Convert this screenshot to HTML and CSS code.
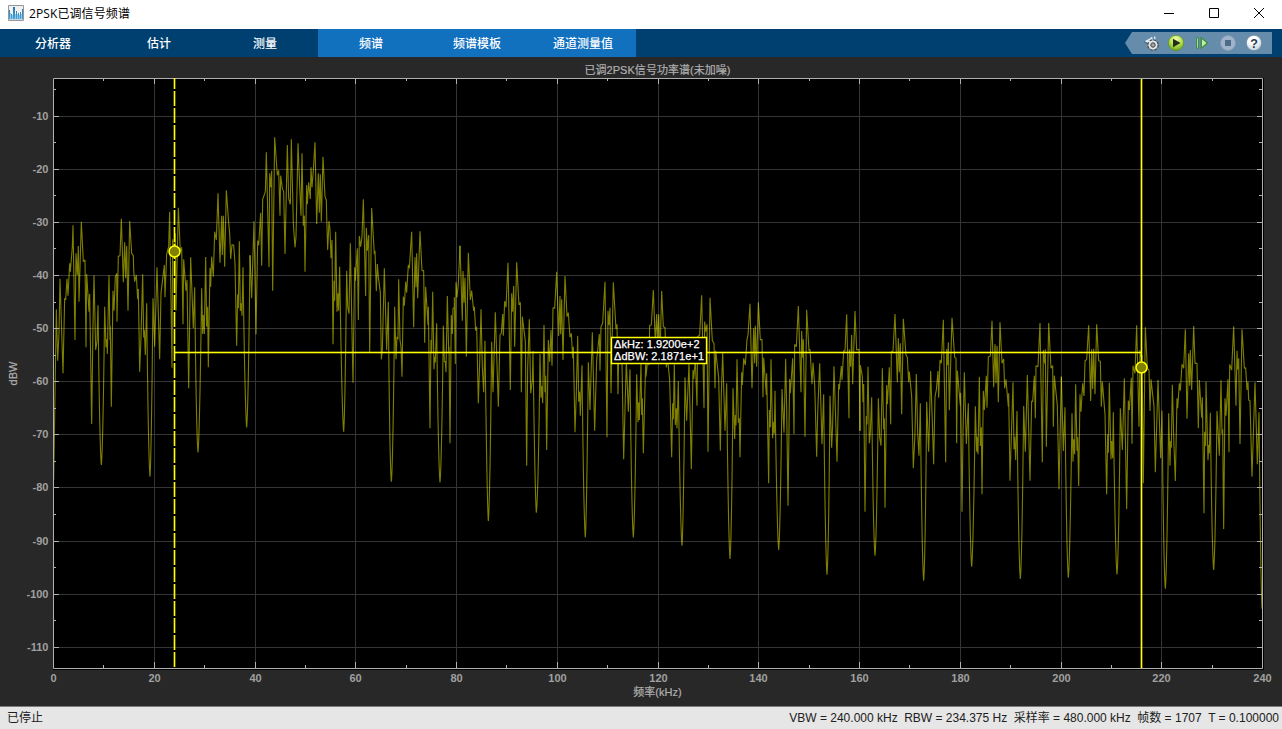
FILE: index.html
```html
<!DOCTYPE html>
<html lang="zh-CN">
<head>
<meta charset="utf-8">
<title>2PSK已调信号频谱</title>
<link rel="stylesheet" href="styles.css">
</head>
<body>
<div class="window">
  <header class="titlebar">
    <svg class="app-icon" width="16" height="16" viewBox="0 0 16 16">
      <defs><linearGradient id="bars" x1="0" y1="0" x2="0" y2="1"><stop offset="0" stop-color="#2374aa"/><stop offset="1" stop-color="#45a5dc"/></linearGradient></defs>
      <path d="M.5.5h15v15H.5z" fill="#f3f0ee" stroke="#969696"/>
      <path d="M1 14.5h14" stroke="#c8d8e2"/>
      <path d="M2 8h1v6H2zM4 10h1v4H4zM7 9h1v5H7zM9 9h1v5H9zM11 10h1v4h-1zM13 9h1v5h-1z" fill="#8fc8e8"/>
      <path d="M1 5h1v9H1zM3 9h1v5H3zM5 2h2v12H5zM8 6h1v8H8zM10 8h1v6h-1zM12 7h1v7h-1zM14 4h1v10h-1z" fill="url(#bars)"/>
    </svg>
    <h1 class="title">2PSK已调信号频谱</h1>
    <div class="window-buttons">
      <svg width="10" height="10" viewBox="0 0 10 10"><path d="M0 5.5h10"/></svg>
      <svg width="10" height="10" viewBox="0 0 10 10"><path d="M.5.5h9v9h-9z"/></svg>
      <svg width="10" height="10" viewBox="0 0 10 10"><path d="M0 0l10 10M10 0L0 10"/></svg>
    </div>
  </header>
  <nav class="toolstrip">
    <span class="tab">分析器</span><span class="tab">估计</span><span class="tab">测量</span><span class="tab tab-active">频谱</span><span class="tab tab-active">频谱模板</span><span class="tab tab-active">通道测量值</span>
    <svg class="quick-access" width="147" height="22" viewBox="1125 32 147 22">
      <defs>
        <radialGradient id="play" cx=".5" cy=".25" r=".8"><stop offset="0" stop-color="#effbb4"/><stop offset=".5" stop-color="#b7e34d"/><stop offset="1" stop-color="#5d9b18"/></radialGradient>
        <radialGradient id="help" cx=".4" cy=".25" r=".8"><stop offset=".35" stop-color="#fff"/><stop offset="1" stop-color="#b8ccd8"/></radialGradient>
      </defs>
      <path d="M1132 32h140v22h-140l-7-11z" fill="#668cab"/>
      <path d="M1144 41.500l7.500-4v8z" fill="#d8eaf7"/><path d="M1144 41.500l7.500 4" stroke="#33556e"/><path d="M1151.700 37v4M1154.700 36.500v4" stroke="#d0e6f4" stroke-width="1.500"/>
      <circle cx="1153" cy="45" r="5" fill="none" stroke="#444" stroke-width="1.600" stroke-dasharray="2.400 1.527"/>
      <circle cx="1153" cy="45" r="3.500" fill="none" stroke="#e6e6e6" stroke-width="2.200"/><circle cx="1153" cy="45" r="2.200" fill="#a0a8ae" stroke="#4b4b4b"/>
      <circle cx="1176" cy="43" r="7.700" fill="url(#play)" stroke="#5c8b2c" stroke-width=".7"/><path d="M1173 38.700l7.500 4.300-7.500 4.300z" fill="#242c1e"/>
      <path d="M1197.500 37.500v11" stroke="#388b35" stroke-width="2.600"/><path d="M1197.500 38.300v9.400" stroke="#b6e5a0" stroke-width=".9"/><path d="M1201.300 37.900l6.200 5.100-6.200 5.100z" fill="#c2ebaa" stroke="#388b35" stroke-width="1.200"/>
      <circle cx="1228" cy="43" r="7.500" fill="#9fb4cb" stroke="#8699b0" stroke-width=".8"/><path d="M1225 40h6v6h-6z" fill="#4d6a89"/>
      <circle cx="1254" cy="43" r="7.700" fill="url(#help)" stroke="#567891" stroke-width=".6"/><text x="1254" y="47.500" class="help-mark">?</text>
    </svg>
  </nav>
  <main class="scope">
    <svg class="chart" width="1282" height="649" viewBox="0 57 1282 649">
      <path d="M53 78h1211v592H53z" fill="#000"/>
      <path class="grid" d="M154.500 79v589M255.500 79v589M355.500 79v589M456.500 79v589M557.500 79v589M658.500 79v589M758.500 79v589M859.500 79v589M960.500 79v589M1061.500 79v589M1161.500 79v589M54 116.500h1208M54 169.500h1208M54 222.500h1208M54 275.500h1208M54 328.500h1208M54 381.500h1208M54 434.500h1208M54 487.500h1208M54 541.500h1208M54 594.500h1208M54 647.500h1208"/>
      <g class="trace">
        <path transform="translate(40 120) scale(.33333)" d="M41 1080L49 568 53 722 57 640 60 476 69 760 74 535 77 540 81 476 84 527 89 430 91 455 97 380 99 316 105 660 108 400 112 465 115 378 117 545 124 305 130 425 135 420 138 682 140 462 147 575 149 522 155 912 159 615 162 466 167 690 171 665 174 556Q179 990 184 1035 189 990 194 560L198 682 201 657 202 702 207 466 210 660 211 617 214 860 219 512 222 572 226 470 230 460 231 605 235 408 240 408 244 296 250 487 254 367 257 475 260 378 264 572 269 303 275 400 280 407 281 450 284 485 289 465 293 538 295 507 299 755 303 652 308 463 311 652 313 630 316 705 320 550Q325 1020 330 1070 334 1020 339 535L344 680 351 442 359 718 363 520 373 435 375 532 380 402 386 380 389 275 396 743 398 358 403 400 406 340 408 572 415 263 421 395 425 382 429 613 431 418 438 512 441 480 446 805 452 412 460 625 464 502Q469 950 474 997 479 950 485 505L488 642 490 585 493 642 497 411 500 620 503 560 505 742 510 443 512 500 515 410 520 470 524 335 529 360 534 220 540 428 545 287 547 405 550 287 554 440 559 211 566 308 569 340 572 417 576 374 581 375 585 430 590 677 593 523 595 565 598 364 601 573 604 550 606 587 609 442Q615 870 620 922 625 870 630 406"/>
        <path transform="translate(250 120) scale(.33333)" d="M0 406L5 535 12 304 18 643 23 362 26 376 32 278 35 437 38 238 46 215 49 97 57 441 59 160 62 202 65 152 68 512 74 52 82 166 86 151 90 287 92 167 97 205 101 215 105 402 112 75 116 235 121 253 124 58 130 310 135 382 138 350 144 70 150 222 153 287 156 100 160 317 163 287 165 455 170 195 172 253 176 187 181 237 183 142 186 202 190 151 195 67 200 312 205 160 208 278 211 163 214 305 219 110 225 230 229 240 230 287 233 390 237 303 240 330 243 415 246 360 249 673 252 482 254 542 257 335 261 575 264 520 266 572 269 440Q276 890 281 935 285 890 290 452L293 560 297 581 301 370 309 788 314 442 316 482 322 385 325 600 328 348 332 380 336 350 340 238 347 528 349 323 352 392 356 345 359 695 365 264 373 403 375 392 379 513 382 432 385 470 391 518 394 718 397 690 403 445 410 690 415 545Q419 1040 424 1085 429 1040 434 560L438 718 441 650 444 658 446 478 450 660 453 680 456 770 460 530 463 557 467 485 470 518 475 435 478 445 485 335 491 622 495 412 498 502 500 400 503 535 510 334 516 452 521 452 524 668 527 500 534 615 535 560 540 925 543 660 545 697 548 515 552 748 554 710 556 727 560 610Q565 1040 570 1087 575 1040 580 617L583 725 586 725 588 757 592 528 596 695 597 680 600 970 604 585 607 642 609 565 613 562 613 532 616 732 618 487 621 532 625 490 630 377"/>
        <path transform="translate(460 230) scale(.33333)" d="M0 47L7 272 9 123 12 218 15 143 19 380 25 68 31 210 35 182 41 243 43 230 47 302 50 290 55 520 59 400 63 238 67 412 71 487 75 332Q81 820 85 873 90 820 95 335L99 487 106 247 115 530 120 315 124 310 128 252 130 317 134 213 138 232 144 98 151 480 155 190 158 245 161 168 164 350 170 97 177 225 181 217 184 487 187 260 196 335 200 707 203 415 208 268 212 490 217 450 219 363Q225 800 229 848 235 800 240 372L243 503 245 468 248 520 252 285 255 487 257 437 260 660 265 330 269 395 273 300 276 407 279 233 284 235 290 125 296 318 300 198 302 313 305 208 309 390 315 138 321 260 325 248 330 322 334 310 338 385 340 350 345 607 349 490 353 317 356 515 359 485 361 557 366 406Q371 870 376 922 380 870 385 397L390 540 397 307 404 602 410 390 418 312 420 422 423 290 428 280 435 155 441 622 444 242 447 285 450 233 453 490 460 157 468 297 471 283 474 493 477 320 486 400 491 688 499 390 505 545 510 418Q515 870 520 922 525 870 530 433L534 577 536 517 538 570 543 400 545 555 547 505 550 670 557 400 558 440 563 390 567 405 569 286 574 285 580 180 586 340 590 252 593 340 596 253 600 380"/>
        <path transform="translate(660 280) scale(.33333)" d="M0 230L5 33 10 140 15 143 19 262 22 230 29 300 35 532 38 370 40 418 43 253 46 435 49 385 51 445 55 303Q61 750 66 797 70 750 75 292L80 422 87 250 94 567 99 270 101 297 106 240 111 377 113 170 119 165 125 46 132 385 134 125 137 155 141 133 144 515 150 53 157 182 162 190 165 325 167 212 176 292 181 512 184 340 188 217 195 452 200 310Q205 780 210 837 215 780 219 325L224 477 226 405 228 436 231 238 235 428 238 415 240 532 245 277 247 315 251 235 256 255 261 178 264 165 270 71 276 325 281 145 284 250 286 137 290 260 295 67 301 180 306 178 309 352 311 233 319 345 320 280 326 610 328 390 331 442 333 238 338 475 341 425 343 461 345 332Q351 760 356 810 361 760 366 327L372 458 377 236 380 385 384 677 389 297 391 340 398 235 402 462 404 193 409 200 415 78 423 337 425 153 428 233 430 178 435 470 440 89 447 212 450 208 456 313 459 248 464 313 470 530 473 400 479 250 486 493 491 343Q496 830 501 884 506 830 510 347L515 503 518 433 522 259 531 545 536 312 538 328 544 258 546 300 551 212 555 213 560 103 567 415 568 208 572 260 575 165 578 313 585 93 590 210 597 208 600 452"/>
        <path transform="translate(860 300) scale(.33333)" d="M0 392L1 195 7 230 9 307 11 252 15 635 19 348 21 373 24 200 28 430 31 398 35 292Q40 720 45 767 50 720 55 295L59 412 63 437 67 205 71 388 73 355 75 623 80 255 82 313 88 202 92 373 94 155 99 153 105 42 112 247 115 115 118 217 121 130 125 343 130 56 138 165 142 172 146 247 148 215 155 290 160 505 165 400 169 222 173 400 177 467 181 310Q186 790 191 842 196 790 200 305L206 455 212 213 221 493 225 290 229 270 234 213 236 293 240 180 244 190 250 59 257 487 260 147 263 195 265 127 268 331 276 53 284 172 288 175 290 430 292 212 301 317 302 278 306 635 309 400 313 217 319 432 325 310Q330 750 335 800 340 750 346 319L350 455 351 410 354 463 358 230 361 438 364 382 366 583 370 272 373 330 379 227 381 323 385 170 391 168 396 62 401 262 405 133 408 250 411 138 415 307 420 67 426 190 431 177 434 265 438 238 445 320 446 280 450 542 454 410 459 247 462 448 464 410 467 480 471 333Q476 790 481 837 486 790 491 318L496 455 502 225 510 542 515 303 518 305 523 227 526 355 528 197 534 200 540 69 547 487 550 150 554 190 556 148 559 440 566 69 573 205 578 197 580 380 583 227 592 317 597 568 604 230"/>
        <path transform="translate(1060 300) scale(.33333)" d="M4 230L10 453 15 322Q20 785 25 833 30 785 36 340L39 485 41 418 44 463 47 253 51 452 53 412 56 558 60 283 63 335 68 250 72 288 75 183 80 178 86 76 92 303 95 148 98 267 101 146 105 283 110 73 116 182 121 184 124 320 127 245 135 343 140 583 143 403 145 458 148 248 153 478 155 423 158 475 160 337Q166 775 171 823 176 775 181 325L187 450 193 235 200 627 205 302 208 330 214 233 216 431 219 197 225 220 230 76 237 380 240 150 243 170 246 165 250 550 256 82 262 205 267 210 270 333 273 238 282 320 286 517 294 240 302 475 306 332Q311 815 316 866 321 815 326 340L330 497 332 423 334 443 337 254 342 440 346 543 351 295 353 325 358 250 361 272 366 193 371 205 376 88 381 356 386 160 389 257 391 150 395 270 401 78 405 190 411 190 415 385 418 240 425 353 427 292 432 640 434 395 437 438 438 245 444 481 446 435 448 460 451 338Q456 760 461 810 466 760 471 333L478 467 483 241 486 402 488 388 491 687 495 295 498 347 504 238 507 457 509 193 515 210 521 79 528 317 531 152 533 208 536 175 540 432 546 88 553 205 557 203 561 270 564 245 566 300 570 303 576 530 585 247 592 493 597 337Q602 850 606 926"/>
      </g>
      <path class="axis" d="M53.500 78.500h1209v590H53.500z"/>
      <path class="axis" d="M154.500 79v5m0 578v6M255.500 79v5m0 578v6M355.500 79v5m0 578v6M456.500 79v5m0 578v6M557.500 79v5m0 578v6M658.500 79v5m0 578v6M758.500 79v5m0 578v6M859.500 79v5m0 578v6M960.500 79v5m0 578v6M1061.500 79v5m0 578v6M1161.500 79v5m0 578v6"/>
      <path class="axis" d="M103.500 79v2m0 584v3M204.500 79v2m0 584v3M305.500 79v2m0 584v3M406.500 79v2m0 584v3M506.500 79v2m0 584v3M607.500 79v2m0 584v3M708.500 79v2m0 584v3M809.500 79v2m0 584v3M909.500 79v2m0 584v3M1010.500 79v2m0 584v3M1111.500 79v2m0 584v3M1212.500 79v2m0 584v3"/>
      <path class="axis" d="M54 116.500h5m1198 0h5M54 169.500h5m1198 0h5M54 222.500h5m1198 0h5M54 275.500h5m1198 0h5M54 328.500h5m1198 0h5M54 381.500h5m1198 0h5M54 434.500h5m1198 0h5M54 487.500h5m1198 0h5M54 541.500h5m1198 0h5M54 594.500h5m1198 0h5M54 647.500h5m1198 0h5"/>
      <path class="axis" d="M54 89.500h2m1203 0h3M54 142.500h2m1203 0h3M54 195.500h2m1203 0h3M54 248.500h2m1203 0h3M54 302.500h2m1203 0h3M54 355.500h2m1203 0h3M54 408.500h2m1203 0h3M54 461.500h2m1203 0h3M54 514.500h2m1203 0h3M54 567.500h2m1203 0h3M54 620.500h2m1203 0h3"/>
      <g class="cursors">
        <path class="halo dashed" d="M174.500 78v589"/><path class="dashed" d="M174.500 78v589"/>
        <path class="halo" d="M1141.500 79v589M175 352.500h966"/><path d="M1141.500 79v589M175 352.500h966"/>
        <circle cx="174.500" cy="251.500" r="5.500"/><circle cx="1141.500" cy="367.500" r="5.500"/>
      </g>
      <path d="M611.500 337.500h95v26h-95z" fill="#000" stroke="#ffff00" stroke-width="1.400"/>
      <g class="readout">
        <text x="614" y="348" textLength="85.500">ΔkHz: 1.9200e+2</text>
        <text x="614" y="360" textLength="90">ΔdBW: 2.1871e+1</text>
      </g>
      <text class="label" x="657.500" y="74" textLength="146">已调2PSK信号功率谱(未加噪)</text>
      <text class="label" x="657.500" y="696">频率(kHz)</text>
      <text class="label" transform="translate(17 373.500) rotate(-90)">dBW</text>
      <g class="ticks">
        <text x="53.500" y="682">0</text><text x="154.500" y="682">20</text><text x="255.500" y="682">40</text><text x="355.500" y="682">60</text><text x="456.500" y="682">80</text><text x="557.500" y="682">100</text><text x="658.500" y="682">120</text><text x="758.500" y="682">140</text><text x="859.500" y="682">160</text><text x="960.500" y="682">180</text><text x="1061.500" y="682">200</text><text x="1161.500" y="682">220</text><text x="1262.500" y="682">240</text>
      </g>
      <g class="ticks ticks-y">
        <text x="48.500" y="120">-10</text><text x="48.500" y="173">-20</text><text x="48.500" y="226">-30</text><text x="48.500" y="279">-40</text><text x="48.500" y="332">-50</text><text x="48.500" y="385">-60</text><text x="48.500" y="438">-70</text><text x="48.500" y="491">-80</text><text x="48.500" y="545">-90</text><text x="48.500" y="598">-100</text><text x="48.500" y="651">-110</text>
      </g>
    </svg>
  </main>
  <footer class="statusbar">
    <span>已停止</span>
    <div class="stats"><span>VBW = 240.000 kHz</span><span>RBW = 234.375 Hz</span><span>采样率 = 480.000 kHz</span><span>帧数 = 1707</span><span>T = 0.100000</span></div>
  </footer>
</div>
</body>
</html>
```
FILE: styles.css
```css
body {
  margin: 0;
  font-family: "Liberation Sans", "Noto Sans CJK SC", sans-serif;
  font-size: 12px;
}

.window {
  display: flex;
  flex-direction: column;
  width: 1282px;
  height: 729px;
  overflow: hidden;
  background: #282828;
}

.titlebar {
  display: flex;
  align-items: center;
  height: 29px;
  box-sizing: border-box;
  padding: 0 18px 3px 8px;
  background: #fff;
}

.title {
  margin: 0 auto 0 5px;
  font: 12px "Open Sans", "Noto Sans CJK SC", sans-serif;
  letter-spacing: 0.1px;
  color: #000;
}

.window-buttons {
  display: flex;
  gap: 35px;
}

.window-buttons svg {
  fill: none;
  stroke: #000;
}

.toolstrip {
  display: flex;
  align-items: center;
  height: 28px;
  background: #004070;
}

.tab {
  width: 106px;
  height: 28px;
  line-height: 30px;
  text-align: center;
  font-weight: 500;
  color: #fff;
}

.tab-active {
  background: #1171bf;
}

.quick-access {
  margin-left: auto;
  margin-right: 10px;
}

.help-mark {
  font: bold 12.5px "Liberation Sans", sans-serif;
  text-anchor: middle;
  fill: #26394d;
}

.scope {
  height: 649px;
}

.chart {
  display: block;
}

.grid {
  stroke: #353535;
}

.trace path {
  fill: none;
  stroke: #ffff00;
  stroke-opacity: 0.5;
  stroke-width: 1.1px;
  stroke-linejoin: bevel;
  vector-effect: non-scaling-stroke;
}

.axis {
  fill: none;
  stroke: #afafaf;
}

.cursors path {
  fill: none;
  stroke: #ffff00;
}

.cursors .halo {
  stroke-width: 2.6px;
  stroke-opacity: 0.4;
}

.cursors .dashed {
  stroke-dasharray: 15 2;
  stroke-dashoffset: 4;
}

.cursors circle {
  fill: #808000;
  stroke: #ffff00;
  stroke-width: 1.5px;
}

.readout {
  font-size: 11px;
  fill: #fff;
  stroke: #fff;
  stroke-width: 0.25px;
}

.label {
  font-size: 11px;
  text-anchor: middle;
  fill: #afafaf;
  stroke: #afafaf;
  stroke-width: 0.2px;
}

.ticks {
  font-size: 11px;
  font-weight: bold;
  text-anchor: middle;
  fill: #a0a0a0;
}

.ticks-y {
  text-anchor: end;
}

.statusbar {
  display: flex;
  justify-content: space-between;
  align-items: baseline;
  height: 23px;
  box-sizing: border-box;
  padding: 1px 3px 0 7px;
  border-top: 1px solid #807c7c;
  background: #e6e6e6;
  color: #202020;
}

.stats {
  display: flex;
  align-items: baseline;
  gap: 6.5px;
}
```
